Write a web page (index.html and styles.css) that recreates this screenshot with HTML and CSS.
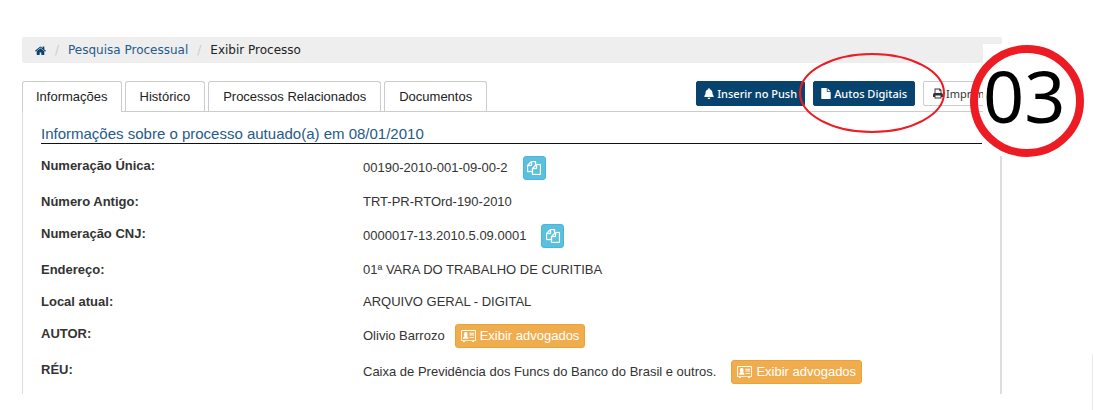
FILE: index.html
```html
<!DOCTYPE html>
<html lang="pt-BR">
<head>
<meta charset="utf-8">
<meta name="viewport" content="width=device-width, initial-scale=1">
<title>Exibir Processo</title>
<link rel="stylesheet" href="styles.css">
</head>
<body>

<!-- Shared icons -->
<svg class="sprite" aria-hidden="true">
  <symbol id="copy" viewBox="0 0 1792 1792">
    <path d="M1696 384q40 0 68 28t28 68v1216q0 40-28 68t-68 28h-960q-40 0-68-28t-28-68v-288h-544q-40 0-68-28t-28-68v-672q0-40 20-88t48-76l408-408q28-28 76-48t88-20h416q40 0 68 28t28 68v328q68-40 128-40h416zm-544 213l-299 299h299v-299zm-640-384l-299 299h299v-299zm196 647l316-316v-416h-384v416q0 40-28 68t-68 28h-416v640h512v-256q0-40 20-88t48-76zm956 804v-1152h-384v416q0 40-28 68t-68 28h-416v640h896z"/>
  </symbol>
  <symbol id="card" viewBox="0 0 16 13">
    <path fill-rule="evenodd" d="M1 0h14q1 0 1 1v10q0 1-1 1h-1v1h-2v-1H4v1H2v-1H1q-1 0-1-1V1q0-1 1-1zM1 1v10h14V1z"/>
    <path d="M2 9.500q0-2.500 1.800-2.800C3 6 3 5.500 3 4.500 3 3 3.800 2.200 5 2.200S7 3 7 4.500c0 1 0 1.500-.8 2.200Q8 7 8 9.500zM9 3h5v1H9zM9 5h5v1H9zM9 7.500h5v1H9z"/>
  </symbol>
</svg>

<div class="page">
  <nav class="breadcrumb">
    <a href="#" aria-label="Início"><svg class="icon-home" viewBox="0 192 1664 1344"><path d="M1408 992v480q0 26-19 45t-45 19h-384v-384h-256v384h-384q-26 0-45-19t-19-45v-480q0-1 .5-3t.5-3l575-474 575 474q1 2 1 6zm223-69l-62 74q-8 9-21 11h-3q-13 0-21-7l-692-577-692 577q-12 8-24 7-13-2-21-11l-62-74q-8-10-7-23.500t11-21.500l719-599q32-26 76-26t76 26l244 204v-195q0-14 9-23t23-9h192q14 0 23 9t9 23v408l219 182q10 8 11 21.500t-7 23.500z"/></svg></a>
    <span class="sep">/</span>
    <a href="#">Pesquisa Processual</a>
    <span class="sep">/</span>
    <span>Exibir Processo</span>
  </nav>

  <div class="toolbar">
    <div class="tabs">
      <a class="tab active" href="#">Informações</a>
      <a class="tab" href="#">Histórico</a>
      <a class="tab" href="#">Processos Relacionados</a>
      <a class="tab" href="#">Documentos</a>
    </div>
    <div class="actions">
      <button type="button" class="btn btn-primary"><svg viewBox="0 0 448 512"><path d="M224 512c35.320 0 63.970-28.650 63.970-64H160.030c0 35.350 28.650 64 63.970 64zm215.390-149.710c-19.320-20.760-55.470-51.990-55.470-154.290 0-77.700-54.480-139.900-127.940-155.160V32c0-17.670-14.320-32-31.980-32s-31.980 14.330-31.980 32v20.840C118.560 68.100 64.080 130.300 64.080 208c0 102.300-36.150 133.530-55.470 154.290-6 6.450-8.660 14.160-8.610 21.710.11 16.400 12.980 32 32.100 32h383.800c19.120 0 32-15.600 32.100-32 .05-7.550-2.610-15.270-8.610-21.710z"/></svg>Inserir no Push</button>
      <button type="button" class="btn btn-primary"><svg viewBox="0 0 1536 1792"><path d="M1024 512v-472q22 14 36 28l408 408q14 14 28 36h-472zm-128 32q0 40 28 68t68 28h544v1056q0 40-28 68t-68 28h-1344q-40 0-68-28t-28-68v-1600q0-40 28-68t68-28h800v544z"/></svg>Autos Digitais</button>
      <button type="button" class="btn btn-default"><svg viewBox="0 0 13 13"><path fill-rule="evenodd" d="M2 0h7l2 2v4q2 0 2 2v3h-2v2H2v-2H0V8q0-2 2-2zM3.200 1.200V6h6.600V3H8V1.200zM3.200 9v2.800h6.600V9z"/></svg>Imprimir</button>
    </div>
  </div>

  <div class="panel">
    <h1>Informações sobre o processo autuado(a) em 08/01/2010</h1>
    <dl class="dados">
      <dt>Numeração Única:</dt>
      <dd class="tall">00190-2010-001-09-00-2 <button type="button" class="btn-copy" aria-label="Copiar"><svg><use href="#copy"/></svg></button></dd>
      <dt>Número Antigo:</dt>
      <dd>TRT-PR-RTOrd-190-2010</dd>
      <dt>Numeração CNJ:</dt>
      <dd class="tall">0000017-13.2010.5.09.0001 <button type="button" class="btn-copy" aria-label="Copiar"><svg><use href="#copy"/></svg></button></dd>
      <dt>Endereço:</dt>
      <dd>01ª VARA DO TRABALHO DE CURITIBA</dd>
      <dt>Local atual:</dt>
      <dd>ARQUIVO GERAL - DIGITAL</dd>
      <dt>AUTOR:</dt>
      <dd class="tall autor">Olivio Barrozo <button type="button" class="btn-warning"><svg><use href="#card"/></svg>Exibir advogados</button></dd>
      <dt>RÉU:</dt>
      <dd class="tall">Caixa de Previdência dos Funcs do Banco do Brasil e outros. <button type="button" class="btn-warning"><svg><use href="#card"/></svg>Exibir advogados</button></dd>
    </dl>
  </div>

  <!-- Step marks over the page -->
  <div class="step">03</div>
  <svg class="step-ring" viewBox="0 0 116 114"><ellipse cx="58" cy="57" rx="53" ry="52"/></svg>
  <svg class="highlight" viewBox="0 0 148 82"><ellipse cx="74" cy="41" rx="72" ry="39"/></svg>
</div>
<div class="side-edge"></div>

</body>
</html>
```
FILE: styles.css
```css
* {
  box-sizing: border-box;
}

body {
  margin: 0;
  background: #fff;
  color: #333;
  font: 13px/20px "Liberation Sans", Arial, sans-serif;
}

a {
  color: #265a88;
  text-decoration: none;
}

button {
  cursor: pointer;
}

svg {
  fill: currentColor;
}

.sprite {
  display: none;
}

.page {
  position: relative;
  margin: 0 92px 0 22px;
  padding-top: 37px;
}

.breadcrumb {
  display: flex;
  align-items: center;
  gap: 9px;
  height: 26px;
  padding: 0 13px;
  border-radius: 2px;
  background: #eee;
  color: #222;
  font: 12px/26px "DejaVu Sans", Verdana, sans-serif;
}

.breadcrumb .sep {
  color: #ccc;
}

.icon-home {
  display: block;
  width: 11px;
  height: 9px;
  color: #08436d;
}

/* Tabs and buttons */
.toolbar {
  display: flex;
  justify-content: space-between;
  margin-top: 18px;
  border-bottom: 1px solid #ccc;
}

.tabs {
  display: flex;
  gap: 3px;
}

.tab {
  height: 30px;
  padding: 0 14px;
  border: 1px solid #ccc;
  border-bottom: 0;
  border-radius: 3px 3px 0 0;
  color: #222;
  line-height: 30px;
}

.tab.active {
  height: 31px;
  margin-bottom: -1px;
  padding: 0 13px;
  background: #fff;
}

.actions {
  display: flex;
  align-items: flex-start;
  gap: 8px;
}

.btn {
  display: flex;
  align-items: center;
  gap: 3px;
  height: 25px;
  padding: 0 7px;
  border: 1px solid #ccc;
  border-radius: 2px;
  font: 11px/23px "Noto Sans", sans-serif;
}

.btn svg {
  width: 10px;
  height: 11px;
}

.btn-primary {
  background: #08436d;
  border-color: #08436d;
  color: #fff;
  font-weight: 500;
}

.btn-default {
  width: 79px;
  padding: 0 9px;
  background: #fff;
  color: #333;
}

.panel {
  padding: 12px 18px 4px;
  border-left: 1px solid #ddd;
  border-right: 2px solid #ddd;
}

h1 {
  margin: 0 0 6px;
  border-bottom: 1px solid #111;
  color: #265a88;
  font-size: 15px;
  font-weight: normal;
  line-height: 19px;
}

.dados {
  display: grid;
  grid-template-columns: 322px 1fr;
  margin: 0;
  line-height: 32px;
}

dt {
  font-weight: bold;
}

dd {
  display: flex;
  align-items: center;
  gap: 15px;
  margin: 0;
}

dd.tall {
  height: 36px;
}

dd.autor {
  gap: 10px;
}

.btn-copy,
.btn-warning {
  display: flex;
  align-items: center;
  height: 24px;
  border: 1px solid #eea236;
  border-radius: 3px;
  background: #f0ad4e;
  color: #fff;
}

.btn-copy {
  justify-content: center;
  width: 23px;
  padding: 0;
  border-color: #46b8da;
  background: #5bc0de;
}

.btn-copy svg {
  width: 14px;
  height: 14px;
  stroke: #fff;
  stroke-width: 40px;
}

.btn-warning {
  gap: 4px;
  padding: 0 5px;
  font: 13px/22px "Liberation Sans", Arial, sans-serif;
}

.btn-warning svg {
  width: 15px;
  height: 12px;
}

/* Marks that lie over the page */
.step {
  position: absolute;
  top: 44px;
  right: -80px;
  width: 99px;
  height: 112px;
  background: #fff;
  color: #000;
  font: 72px/102px "Noto Sans", sans-serif;
}

.step-ring,
.highlight {
  position: absolute;
  fill: none;
  stroke: #ed1c24;
}

.step-ring {
  top: 44px;
  right: -83px;
  width: 116px;
  height: 114px;
  stroke-width: 8px;
}

.highlight {
  top: 52px;
  right: 56px;
  width: 148px;
  height: 82px;
  stroke-width: 2px;
}

.side-edge {
  position: absolute;
  top: 354px;
  right: 0;
  bottom: 0;
  width: 2px;
  border-left: 1px solid #e8e8ee;
}
```
